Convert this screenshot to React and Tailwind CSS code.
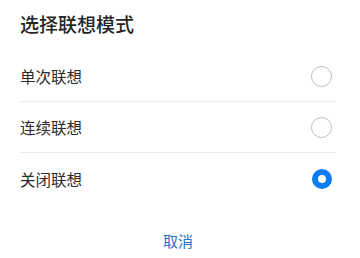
export default function App() {
  const items = [
    { label: "单次联想", checked: false },
    { label: "连续联想", checked: false },
    { label: "关闭联想", checked: true },
  ];
  return (
    <div
      className="w-[360px] h-[258px] bg-white overflow-hidden flex flex-col"
      style={{ fontFamily: '"Noto Sans CJK SC", "Noto Sans", sans-serif' }}
    >
      <div className="pl-5 pt-[12px] h-[51px] text-[19px] leading-[24px] font-medium text-[#262626]">
        选择联想模式
      </div>
      <div className="pl-5 pr-6 flex flex-col">
        {items.map((it, i) => (
          <div
            key={it.label}
            className={
              "h-[51px] flex items-center justify-between " +
              (i < items.length - 1 ? "border-b border-[#ededed]" : "")
            }
          >
            <span className="text-[15.5px] leading-[20px] text-[#2a2a2a]">{it.label}</span>
            {it.checked ? (
              <span className="w-[20px] h-[20px] rounded-full border-[6px] border-[#0a7cf5] mr-[4px]" />
            ) : (
              <span className="w-[21px] h-[21px] rounded-full border border-[#bcbcbc] mr-[4px]" />
            )}
          </div>
        ))}
      </div>
      <div className="mt-[26px] flex justify-center">
        <span className="text-[15px] leading-[22px] text-[#2a6fc7] -ml-1">取消</span>
      </div>
    </div>
  );
}
